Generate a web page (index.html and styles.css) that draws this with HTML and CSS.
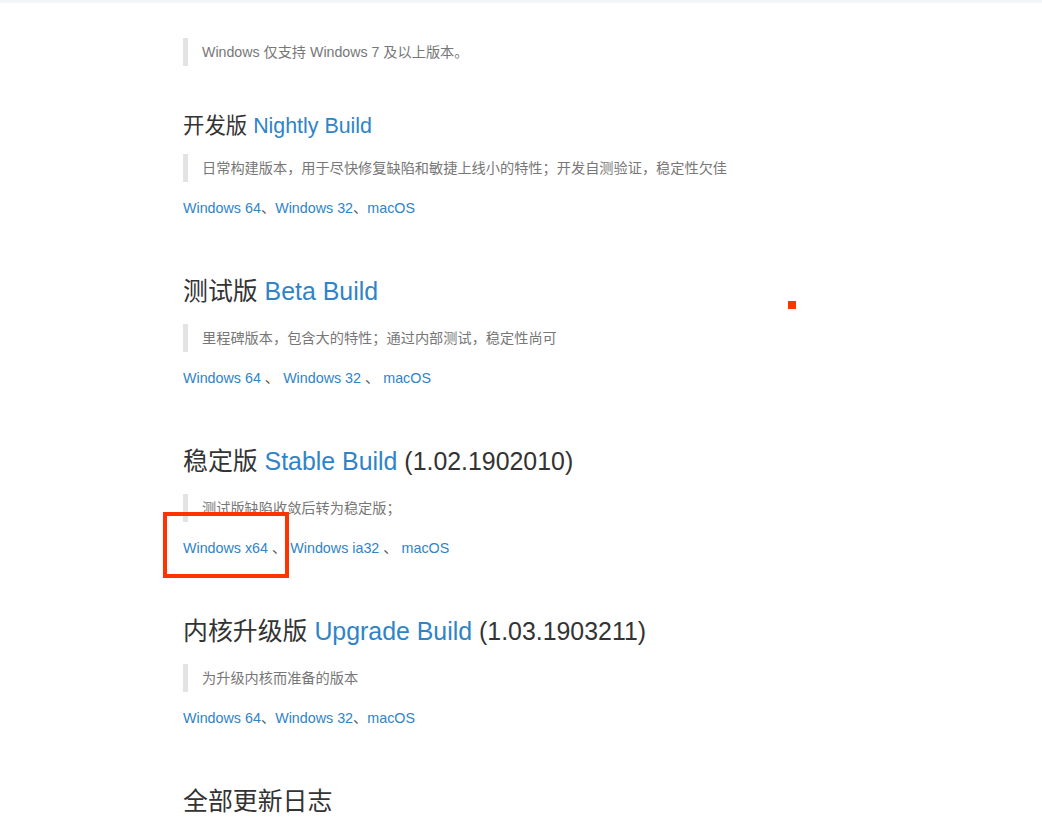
FILE: index.html
```html
<!DOCTYPE html>
<html lang="zh-CN">
<head>
<meta charset="utf-8">
<title>下载</title>
<link rel="stylesheet" href="styles.css">
</head>
<body>
<div class="topbar"></div>
<main class="content">
  <blockquote class="note note-first">Windows 仅支持 Windows 7 及以上版本。</blockquote>

  <section class="build">
    <h3 class="build-title small">开发版 <a href="#">Nightly Build</a></h3>
    <blockquote class="note">日常构建版本<span class="punc">，</span>用于尽快修复缺陷和敏捷上线小的特性<span class="punc">；</span>开发自测验证<span class="punc">，</span>稳定性欠佳</blockquote>
    <p class="links"><a href="#">Windows 64</a>、<a href="#">Windows 32</a>、<a href="#">macOS</a></p>
  </section>

  <section class="build">
    <h2 class="build-title">测试版 <a href="#">Beta Build</a></h2>
    <blockquote class="note">里程碑版本<span class="punc">，</span>包含大的特性<span class="punc">；</span>通过内部测试<span class="punc">，</span>稳定性尚可</blockquote>
    <p class="links"><a href="#">Windows 64</a> 、 <a href="#">Windows 32</a> 、 <a href="#">macOS</a></p>
  </section>

  <section class="build">
    <h2 class="build-title">稳定版 <a href="#">Stable Build</a> (1.02.1902010)</h2>
    <blockquote class="note">测试版缺陷收敛后转为稳定版<span class="punc">；</span></blockquote>
    <p class="links"><a href="#">Windows x64</a> 、 <a href="#">Windows ia32</a> 、 <a href="#">macOS</a></p>
  </section>

  <section class="build">
    <h2 class="build-title">内核升级版 <a href="#">Upgrade Build</a> (1.03.1903211)</h2>
    <blockquote class="note">为升级内核而准备的版本</blockquote>
    <p class="links"><a href="#">Windows 64</a>、<a href="#">Windows 32</a>、<a href="#">macOS</a></p>
  </section>

  <section class="build">
    <h2 class="build-title">全部更新日志</h2>
  </section>
</main>
<div class="mark-box"></div>
<div class="mark-dot"></div>
</body>
</html>
```

FILE: styles.css
```css
html, body {
  margin: 0;
  padding: 0;
  background: #fff;
}
body {
  font-family: "Liberation Sans", "Noto Sans CJK SC", sans-serif;
  font-size: 14.3px;
  line-height: 20px;
  color: #333;
  position: relative;
  height: 827px;
  overflow: hidden;
}
a {
  color: #2f84c8;
  text-decoration: none;
}
.topbar {
  height: 3px;
  background: #f3f6f8;
}
.content {
  width: 676px;
  margin: 0 auto;
  padding-top: 35px;
}
.note {
  margin: 0;
  padding: 4px 0 4px 14px;
  border-left: 5px solid #e3e3e3;
  color: #777;
  font-size: 14.2px;
  line-height: 20px;
}
.punc {
  font-family: "Noto Sans CJK TC", "Noto Sans CJK SC", sans-serif;
  line-height: 1;
}
.note-first {
  margin-bottom: 46px;
}
.build {
  margin-bottom: 56px;
}
.build-title {
  margin: 0 0 16px;
  font-size: 24.9px;
  line-height: 34px;
  font-weight: normal;
  color: #333;
}
.build-title.small {
  font-size: 21.4px;
  line-height: 28px;
  margin-bottom: 14px;
}
.links {
  margin: 16px 0 0;
  color: #555;
}
.mark-box {
  position: absolute;
  left: 163px;
  top: 512px;
  width: 118px;
  height: 58px;
  border: 4px solid #ff3300;
}
.mark-dot {
  position: absolute;
  left: 788px;
  top: 301px;
  width: 8px;
  height: 8px;
  background: #ff3300;
}
```
